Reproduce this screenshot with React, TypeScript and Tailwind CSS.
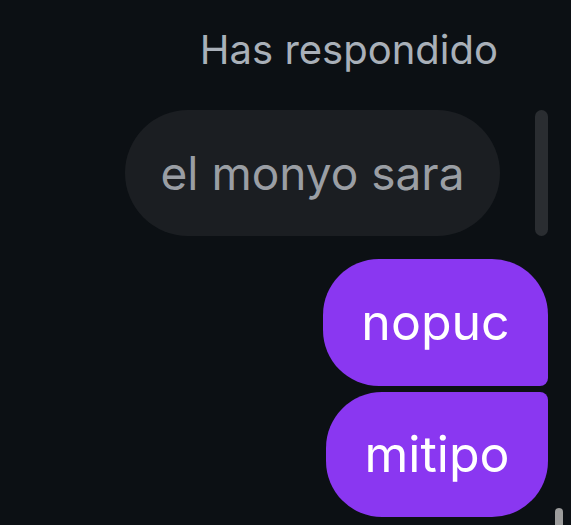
export default function App() {
  return (
    <div
      className="relative h-[525px] w-[571px] overflow-hidden bg-[#0c1014]"
      style={{ fontFamily: 'Inter, "Noto Sans", sans-serif' }}
    >
      <div className="flex flex-col items-end pr-[23px]">
        {/* reply header */}
        <div className="mt-[26px] pr-[50px] text-[40px] leading-[48px] text-[#a9b0b9]">
          Has respondido
        </div>

        {/* quoted message + bar */}
        <div className="mt-[36px] flex items-center gap-[35px]">
          <div className="flex h-[126px] w-[375px] items-center justify-center rounded-full bg-[#1b1e22] text-[46px] text-[#9a9ea4]">
            el monyo sara
          </div>
          <div className="h-[126px] w-[13px] rounded-full bg-[#2a2d31]" />
        </div>

        {/* my messages */}
        <div className="mt-[23px] flex flex-col items-end gap-[6px]">
          <div className="flex h-[127px] w-[225px] items-center justify-center rounded-[56px] rounded-br-[8px] bg-[#8a37f1] text-[50px] text-white">
            nopuc
          </div>
          <div className="flex h-[125px] w-[222px] items-center justify-center rounded-[56px] rounded-tr-[8px] bg-[#8a37f1] text-[50px] text-white">
            mitipo
          </div>
        </div>
      </div>

      {/* scroll thumb */}
      <div className="absolute left-[555px] top-[508px] h-[30px] w-[8px] rounded-full bg-[#9c9c9c]" />
    </div>
  )
}
